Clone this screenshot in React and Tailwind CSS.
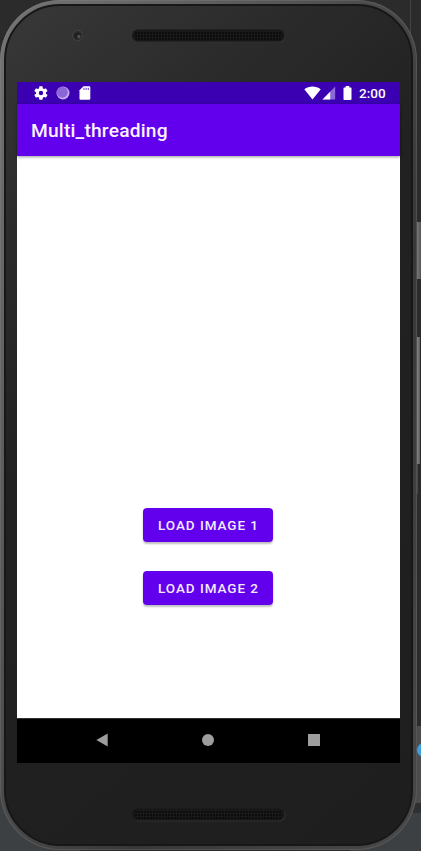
import React from "react";

function Desktop() {
  return (
    <div className="absolute inset-0 overflow-hidden bg-[#2b2b2b]">
      <div className="absolute left-[410px] top-0 h-[726px] w-px bg-[#444444]" />
      <div className="absolute left-[410px] top-[726px] h-[77px] w-[11px] bg-[#4a4c4e]" />
      <div className="absolute left-[417px] top-[743px] size-[14px] rounded-full bg-[#3f9fd8]" />
      <div className="absolute left-[370px] top-[803px] h-[11px] w-[51px] bg-[#2d2f30]" />
      <div className="absolute left-[350px] top-[813px] h-[38px] w-[71px] bg-[#3c4043]" />
      <div className="absolute left-0 top-[780px] h-[71px] w-[80px] bg-[#3c4043]" />
      <div className="absolute left-[417px] top-[222px] h-[57px] w-[4px] bg-gradient-to-r from-[#777777] to-[#555555]" />
      <div className="absolute left-[417px] top-[337px] h-[127px] w-[3px] bg-gradient-to-r from-[#858585] to-[#5c5c5c]" />
      <div className="absolute left-[416px] top-[464px] h-[30px] w-[2px] bg-[#484848]" />
    </div>
  );
}

function Grille() {
  return (
    <svg width="154" height="14" viewBox="0 0 154 14" className="block">
      <defs>
        <pattern id="holes" width="3" height="3" patternUnits="userSpaceOnUse">
          <rect width="3" height="3" fill="#191919" />
          <rect width="2" height="2" fill="#0c0c0c" />
        </pattern>
      </defs>
      <rect x="1" y="1" width="152.5" height="12.5" rx="6.2" fill="#303030" />
      <rect x="0" y="0.5" width="152.5" height="12" rx="6" fill="#171717" />
      <rect x="2" y="2" width="149" height="9" rx="4.5" fill="url(#holes)" />
    </svg>
  );
}

function StatusBar() {
  return (
    <div className="flex h-[22px] items-center bg-[#3a00b2] pl-4 pr-[15px] text-white">
      <svg width="16" height="16" viewBox="0 0 24 24" fill="currentColor">
        <path d="M19.4 13a7.5 7.5 0 0 0 0-2l2.1-1.6a.5.5 0 0 0 .1-.7l-2-3.4a.5.5 0 0 0-.6-.2l-2.5 1a7.3 7.3 0 0 0-1.7-1l-.4-2.6a.5.5 0 0 0-.5-.5h-4a.5.5 0 0 0-.5.5L9 5.1a7.7 7.7 0 0 0-1.7 1l-2.5-1a.5.5 0 0 0-.6.2l-2 3.4a.5.5 0 0 0 .1.7L4.5 11a8 8 0 0 0 0 2l-2.2 1.6a.5.5 0 0 0-.1.7l2 3.4c.1.2.4.3.6.2l2.5-1a7.3 7.3 0 0 0 1.7 1l.4 2.6c0 .2.2.5.5.5h4c.3 0 .5-.2.5-.5l.4-2.6a7.7 7.7 0 0 0 1.7-1l2.5 1c.2.1.5 0 .6-.2l2-3.4a.5.5 0 0 0-.1-.7zM12 15.3a3.3 3.3 0 1 1 0-6.6 3.3 3.3 0 0 1 0 6.6z" />
      </svg>
      <svg width="14" height="14" viewBox="0 0 14 14" className="ml-[7px]">
        <circle cx="7" cy="7" r="6.5" fill="#c3aaf0" />
        <circle cx="6.3" cy="6.2" r="5.5" fill="#8a66d6" />
      </svg>
      <svg width="12" height="14" viewBox="0 0 12 14" className="ml-[9px]">
        <path d="M4.5 0.3H10.2Q11.3 0.3 11.3 1.4V12.5Q11.3 13.7 10.2 13.7H1.6Q0.5 13.7 0.5 12.5V4.3Z" fill="#fff" />
        <path d="M5 1.8v2.2M7.2 1.8v2.2M9.3 1.8v2.2" stroke="#3a00b2" strokeWidth="0.8" />
      </svg>
      <div className="ml-auto flex items-center">
        <svg width="17" height="14" viewBox="0 0 17 14">
          <path d="M0.3 3.2C5 -0.5 12 -0.5 16.7 3.2L8.5 13.5Z" fill="#fff" />
        </svg>
        <svg width="14" height="14" viewBox="0 0 14 14" className="ml-px">
          <path d="M13.2 0.5V13.5H0.5Z" fill="#8c68d9" />
          <path d="M8.2 5.7V13.5H0.5Z" fill="#fff" />
        </svg>
        <svg width="9" height="14" viewBox="0 0 9 14" className="ml-[7px]">
          <path d="M2.7 0H6.3V1.4H7.7Q8.5 1.4 8.5 2.2V13Q8.5 14 7.7 14H1.3Q0.5 14 0.5 13V2.2Q0.5 1.4 1.3 1.4H2.7Z" fill="#fff" />
        </svg>
        <span className="ml-[7px] w-[26px] whitespace-nowrap pt-px text-[13.5px] font-medium leading-[21px]">2:00</span>
      </div>
    </div>
  );
}

function LoadButton({ children }) {
  return (
    <button className="h-[34px] w-[130px] whitespace-nowrap rounded-[4px] bg-[#6200ee] pl-px pt-px text-[13.5px] font-medium tracking-[0.95px] text-[#f4eaff] shadow-[0_2px_2px_rgba(0,0,0,0.25)]">
      {children}
    </button>
  );
}

function NavigationBar() {
  return (
    <div className="flex h-[45px] items-center border-t border-[#333333] bg-black pb-[2px] pl-[79px] text-[#9e9e9e]">
      <svg width="12" height="14" viewBox="0 0 12 14" fill="currentColor">
        <path d="M0.3 7L11.7 0.5V13.5Z" />
      </svg>
      <div className="ml-[94px] size-[12px] rounded-full bg-[#9e9e9e]" />
      <div className="ml-[94px] size-[12px] bg-[#9e9e9e]" />
    </div>
  );
}

export default function App() {
  return (
    <div className="relative h-[851px] w-[421px] overflow-hidden bg-[#2b2b2b] font-['Roboto',sans-serif]">
      <Desktop />
      <div className="relative h-[850px] w-[417px] rounded-[60px] bg-[linear-gradient(115deg,#747474_0%,#5a5a5a_30%,#383838_65%,#484848_100%)] p-1 shadow-[inset_0_0_1px_1px_rgba(150,150,150,0.25)]">
        <div className="flex h-full flex-col items-center rounded-[56px] border-2 border-[#171717] bg-[linear-gradient(140deg,#383838_0%,#2b2b2b_20%,#212121_40%,#1e1e1e_100%)]">
          <div className="relative flex h-[76px] w-full shrink-0 justify-center pt-[23px]">
            <div className="absolute left-[66px] top-[24px] flex size-[11px] items-center justify-center rounded-full border border-[#444444] bg-[#292929]">
              <div className="size-[6px] rounded-full bg-[radial-gradient(circle_at_65%_60%,#65656d_0%,#18181a_55%)]" />
            </div>
            <Grille />
          </div>
          <main className="flex h-[681px] w-[383px] shrink-0 flex-col bg-white">
            <StatusBar />
            <header className="z-10 flex h-[52px] items-center bg-[#6200ee] pl-[14px] pt-[2px] text-[19.2px] font-medium tracking-[0.2px] text-[#faf2ff] shadow-[0_1px_3px_rgba(0,0,0,0.4)]">
              Multi_threading
            </header>
            <section className="flex flex-1 flex-col items-center gap-[29px] pr-px pt-[352px]">
              <LoadButton>LOAD IMAGE 1</LoadButton>
              <LoadButton>LOAD IMAGE 2</LoadButton>
            </section>
            <NavigationBar />
          </main>
          <div className="flex w-full justify-center pt-[45px]">
            <Grille />
          </div>
        </div>
      </div>
    </div>
  );
}
